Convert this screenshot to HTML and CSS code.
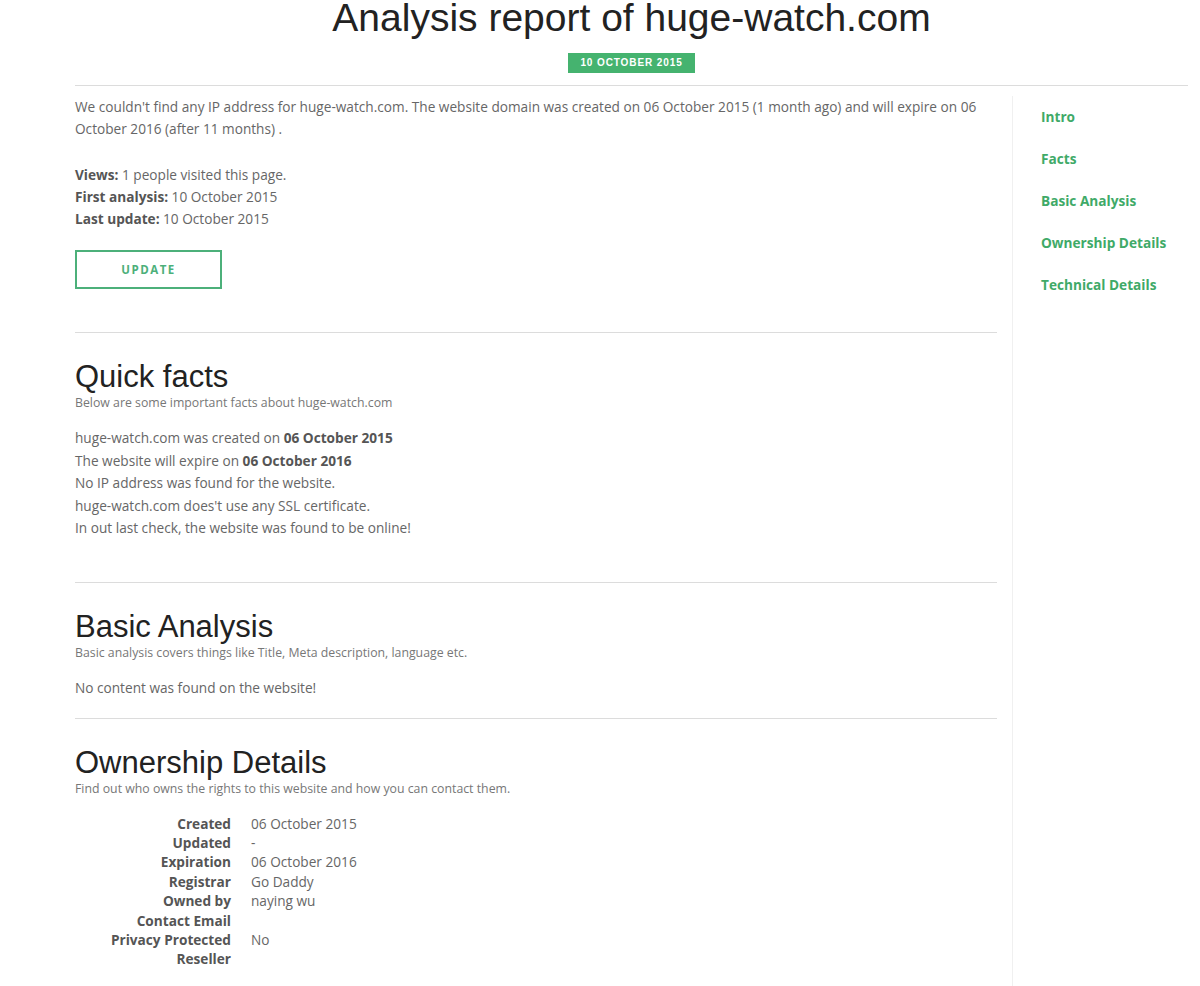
FILE: index.html
```html
<!DOCTYPE html>
<html lang="en">
<head>
<meta charset="utf-8">
<title>Analysis report of huge-watch.com</title>
<link rel="stylesheet" href="styles.css">
</head>
<body>
<div class="page">
  <header class="header">
    <h1 class="title">Analysis report of huge-watch.com</h1>
    <span class="badge">10 October 2015</span>
  </header>
  <div class="layout">
    <main class="main">
      <section class="intro">
        <p class="lead">We couldn't find any IP address for huge-watch.com. The website domain was created on 06 October 2015 (1 month ago) and will expire on 06 October 2016 (after 11 months) .</p>
        <div class="stats">
          <div><b>Views:</b> 1 people visited this page.</div>
          <div><b>First analysis:</b> 10 October 2015</div>
          <div><b>Last update:</b> 10 October 2015</div>
        </div>
        <button class="btn">UPDATE</button>
      </section>
      <section class="section facts">
        <h2 class="sec-title">Quick facts</h2>
        <p class="sec-sub">Below are some important facts about huge-watch.com</p>
        <div class="facts-list">
          <div>huge-watch.com was created on <b>06 October 2015</b></div>
          <div>The website will expire on <b>06 October 2016</b></div>
          <div>No IP address was found for the website.</div>
          <div>huge-watch.com does't use any SSL certificate.</div>
          <div>In out last check, the website was found to be online!</div>
        </div>
      </section>
      <section class="section basic">
        <h2 class="sec-title">Basic Analysis</h2>
        <p class="sec-sub">Basic analysis covers things like Title, Meta description, language etc.</p>
        <p class="plain">No content was found on the website!</p>
      </section>
      <section class="section owner">
        <h2 class="sec-title">Ownership Details</h2>
        <p class="sec-sub">Find out who owns the rights to this website and how you can contact them.</p>
        <dl class="details">
          <dt>Created</dt><dd>06 October 2015</dd>
          <dt>Updated</dt><dd>-</dd>
          <dt>Expiration</dt><dd>06 October 2016</dd>
          <dt>Registrar</dt><dd>Go Daddy</dd>
          <dt>Owned by</dt><dd>naying wu</dd>
          <dt>Contact Email</dt><dd></dd>
          <dt>Privacy Protected</dt><dd>No</dd>
          <dt>Reseller</dt><dd></dd>
        </dl>
      </section>
    </main>
    <aside class="sidebar">
      <nav class="nav">
        <a href="#">Intro</a>
        <a href="#">Facts</a>
        <a href="#">Basic Analysis</a>
        <a href="#">Ownership Details</a>
        <a href="#">Technical Details</a>
      </nav>
    </aside>
  </div>
</div>
</body>
</html>
```
FILE: styles.css
```css
html, body {
  margin: 0;
  padding: 0;
  background: #ffffff;
}
body {
  font-family: "Open Sans", "Liberation Sans", sans-serif;
  font-size: 13.65px;
  color: #666666;
}
.page {
  margin-left: 75px;
  width: 1113px;
}
.header {
  display: flex;
  flex-direction: column;
  align-items: center;
  border-bottom: 1px solid #dcdcdc;
  padding-bottom: 12px;
}
.title {
  margin: 0;
  padding-top: 2px;
  font-family: "Liberation Sans", Arial, sans-serif;
  font-weight: normal;
  font-size: 39px;
  line-height: 31px;
  color: #222222;
}
.badge {
  margin-top: 20px;
  background: #45b36f;
  color: #ffffff;
  font-family: "Liberation Sans", Arial, sans-serif;
  font-weight: bold;
  font-size: 10px;
  letter-spacing: 0.9px;
  text-transform: uppercase;
  height: 20px;
  line-height: 20px;
  width: 127px;
  text-align: center;
}
.layout {
  display: flex;
  padding-top: 10px;
}
.main {
  width: 922px;
}
.sidebar {
  margin-left: 15px;
  border-left: 1px solid #f0f0f0;
  padding-left: 28px;
  min-height: 900px;
}
.nav {
  display: flex;
  flex-direction: column;
  padding-top: 11px;
  gap: 23px;
}
.nav a {
  font-weight: bold;
  font-size: 13.65px;
  line-height: 19px;
  color: #3faa68;
  text-decoration: none;
}
p { margin: 0; }
b { color: #555555; font-weight: bold; }
.lead {
  line-height: 22px;
}
.stats {
  margin-top: 24px;
  line-height: 22px;
}
.btn {
  display: block;
  margin-top: 20px;
  width: 147px;
  height: 39px;
  background: #ffffff;
  border: 2px solid #4cb07a;
  color: #4cb07a;
  font-family: "Open Sans", sans-serif;
  font-weight: bold;
  font-size: 11.5px;
  letter-spacing: 1.5px;
  cursor: pointer;
  padding: 0;
}
.intro {
  padding-bottom: 43px;
  border-bottom: 1px solid #dcdcdc;
}
.section {
  border-bottom: 1px solid #dcdcdc;
  padding-top: 27px;
}
.sec-title {
  margin: 0;
  font-family: "Liberation Sans", Arial, sans-serif;
  font-weight: normal;
  font-size: 31px;
  line-height: 34px;
  color: #222222;
}
.sec-sub {
  margin-top: 1px;
  font-size: 12.3px;
  line-height: 16px;
  color: #777777;
}
.facts {
  padding-bottom: 42px;
}
.facts-list {
  margin-top: 16px;
  line-height: 22.5px;
}
.basic {
  padding-bottom: 19px;
}
.plain {
  margin-top: 16px;
  line-height: 22px;
}
.owner {
  border-bottom: none;
}
.details {
  margin: 17px 0 0;
  display: grid;
  grid-template-columns: 156px 1fr;
  column-gap: 20px;
  line-height: 19.4px;
}
.details dt {
  text-align: right;
  font-weight: bold;
  color: #555555;
}
.details dd {
  margin: 0;
  min-height: 19.4px;
}
```
